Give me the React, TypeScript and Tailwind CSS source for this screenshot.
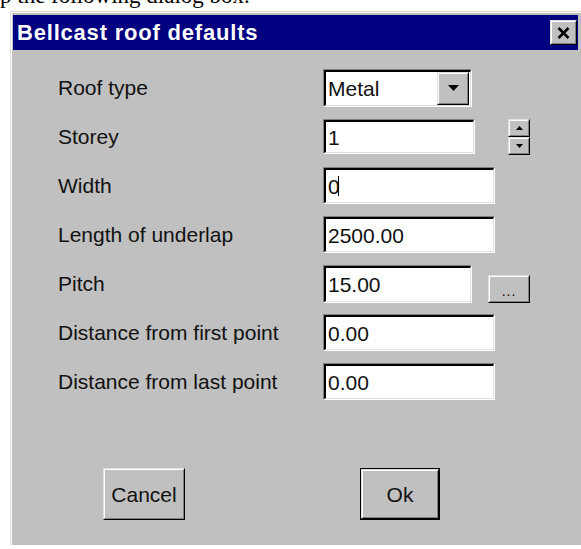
import React from "react";

const ui = { fontFamily: '"Liberation Sans", Arial, sans-serif' };

function Sunken({ w, h, children }: { w: number; h: number; children?: React.ReactNode }) {
  return (
    <div
      className="border-t border-l border-b border-r border-t-[#808080] border-l-[#808080] border-b-white border-r-white"
      style={{ width: w, height: h }}
    >
      <div className="w-full h-full border-t-2 border-l-2 border-b border-r border-t-black border-l-black border-b-[#dfdfdf] border-r-[#dfdfdf] bg-white flex items-center">
        {children}
      </div>
    </div>
  );
}

function Field({ value, w, h = 37, caret = false }: { value: string; w: number; h?: number; caret?: boolean }) {
  return (
    <Sunken w={w} h={h}>
      <span className="pl-[2px] text-[21px] leading-none text-[#111]">{value}</span>
      {caret && <span className="ml-[-2px] w-[1px] h-[20px] bg-black" />}
    </Sunken>
  );
}

function Raised({ className, children }: { className?: string; children?: React.ReactNode }) {
  return (
    <div className={"border-t border-l border-b border-r border-t-[#dfdfdf] border-l-[#dfdfdf] border-b-black border-r-black " + (className ?? "")}>
      <div className="w-full h-full border-t border-l border-b border-r border-t-white border-l-white border-b-[#808080] border-r-[#808080] bg-[#c0c0c0] flex items-center justify-center">
        {children}
      </div>
    </div>
  );
}

function Row({ label, children }: { label: string; children: React.ReactNode }) {
  return (
    <div className="flex items-center h-[37px]">
      <div className="w-[265px] text-[21px] leading-none text-[#111]">{label}</div>
      {children}
    </div>
  );
}

export default function App() {
  return (
    <div className="w-[581px] h-[549px] bg-white overflow-hidden" style={ui}>
      {/* trailing line of the surrounding document text */}
      <div className="h-[11px] overflow-hidden">
        <p
          className="mt-[-16px] text-[23px] leading-[23px] whitespace-nowrap text-black"
          style={{ fontFamily: '"Liberation Serif", "Times New Roman", serif' }}
        >
          p the following dialog box.
        </p>
      </div>

      {/* dialog window */}
      <div className="ml-[10px] w-[575px] h-[534px] border-t border-l border-t-[#dfdfdf] border-l-[#dfdfdf]">
        <div className="w-full h-full border-t border-l border-t-white border-l-white bg-[#c0c0c0] pt-[2px] pl-[1px] flex flex-col">
          {/* title bar */}
          <div className="h-[35px] w-[565px] bg-[#000080] flex items-center justify-between pl-[4px] pr-[1px]">
            <span className="text-white font-bold text-[22px] leading-none tracking-[0.8px]">Bellcast roof defaults</span>
            <Raised className="w-[27px] h-[25px]">
              <svg width="13" height="12" viewBox="0 0 13 12">
                <path d="M1.5 1 L11.5 11 M11.5 1 L1.5 11" stroke="black" strokeWidth="2.6" />
              </svg>
            </Raised>
          </div>

          {/* form */}
          <div className="pl-[45px] pt-[19px] flex flex-col gap-[12px]">
            <Row label="Roof type">
              <Sunken w={149} h={38}>
                <span className="pl-[2px] text-[21px] leading-none text-[#111] flex-1">Metal</span>
                <Raised className="w-[32px] h-[33px] mr-[1px]">
                  <svg width="11" height="6" viewBox="0 0 11 6">
                    <path d="M0 0 H11 L5.5 6 Z" fill="black" />
                  </svg>
                </Raised>
              </Sunken>
            </Row>

            <Row label="Storey">
              <Field value="1" w={152} h={35} />
              <div className="ml-[33px] flex flex-col">
                <Raised className="w-[22px] h-[18px]">
                  <svg width="7" height="4" viewBox="0 0 7 4">
                    <path d="M0 4 H7 L3.5 0 Z" fill="black" />
                  </svg>
                </Raised>
                <Raised className="w-[22px] h-[18px]">
                  <svg width="7" height="4" viewBox="0 0 7 4">
                    <path d="M0 0 H7 L3.5 4 Z" fill="black" />
                  </svg>
                </Raised>
              </div>
            </Row>

            <Row label="Width">
              <Field value="0" w={172} caret />
            </Row>

            <Row label="Length of underlap">
              <Field value="2500.00" w={172} />
            </Row>

            <Row label="Pitch">
              <Field value="15.00" w={149} h={38} />
              <Raised className="ml-[16px] w-[42px] h-[28px] self-end mb-[-1px]">
                <span className="text-[14px] leading-none text-black tracking-[1px] mt-[4px]">...</span>
              </Raised>
            </Row>

            <Row label="Distance from first point">
              <Field value="0.00" w={172} />
            </Row>

            <Row label="Distance from last point">
              <Field value="0.00" w={172} />
            </Row>
          </div>

          {/* buttons */}
          <div className="flex items-center pl-[90px] mt-[68px]">
            <Raised className="w-[82px] h-[52px]">
              <span className="text-[21px] leading-none text-[#111]">Cancel</span>
            </Raised>
            <div className="ml-[175px] w-[80px] h-[52px] border border-black">
              <Raised className="w-full h-full">
                <span className="text-[21px] leading-none text-[#111]">Ok</span>
              </Raised>
            </div>
          </div>
        </div>
      </div>
    </div>
  );
}
